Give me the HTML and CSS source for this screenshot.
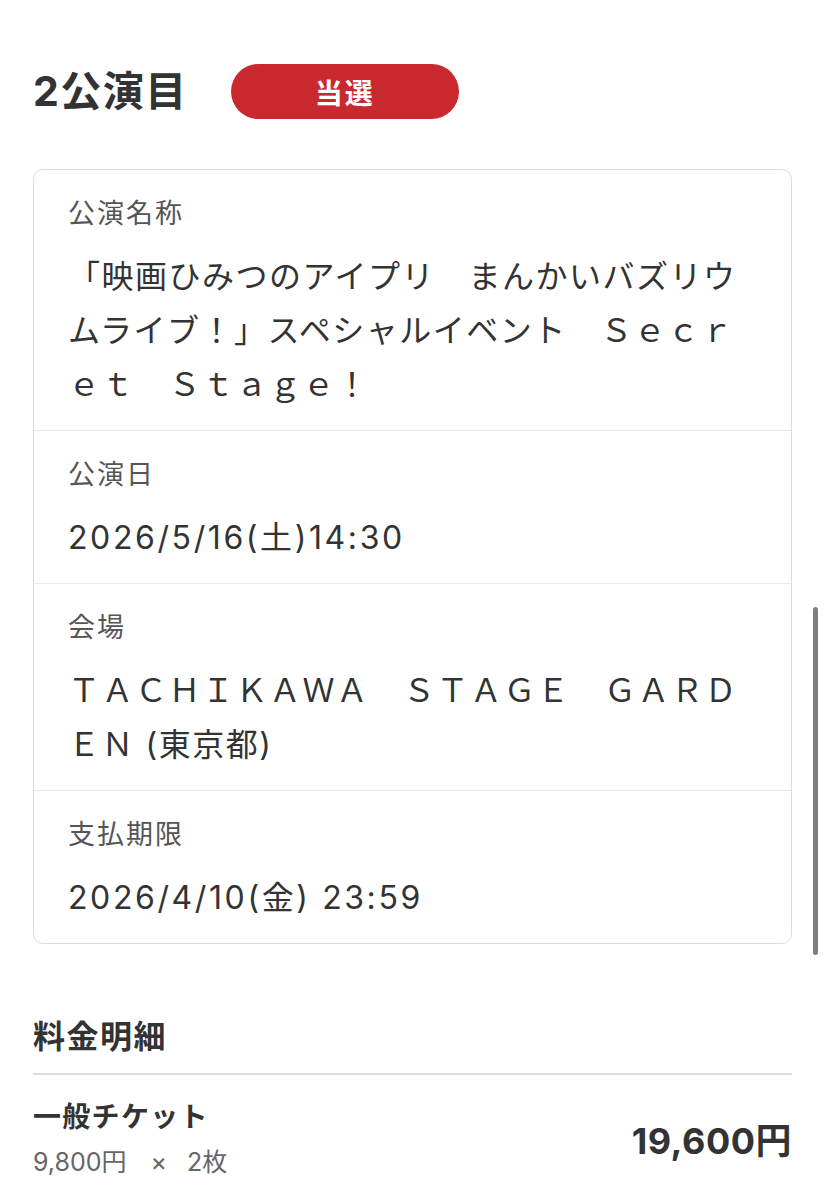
FILE: index.html
```html
<!DOCTYPE html>
<html lang="ja">
<head>
<meta charset="utf-8">
<link rel="stylesheet" href="styles.css">
</head>
<body>
<div class="page">
  <div class="head">
    <h1 class="title">2公演目</h1>
    <span class="badge">当選</span>
  </div>
  <div class="card">
    <div class="row">
      <div class="label">公演名称</div>
      <div class="value">「映画ひみつのアイプリ　まんかいバズリウムライブ！」スペシャルイベント　Ｓｅｃｒｅｔ　Ｓｔａｇｅ！</div>
    </div>
    <div class="row">
      <div class="label">公演日</div>
      <div class="value date">2026/5/16(土)14:30</div>
    </div>
    <div class="row">
      <div class="label">会場</div>
      <div class="value">ＴＡＣＨＩＫＡＷＡ　ＳＴＡＧＥ　ＧＡＲＤＥＮ (東京都)</div>
    </div>
    <div class="row">
      <div class="label">支払期限</div>
      <div class="value date">2026/4/10(金) 23:59</div>
    </div>
  </div>
  <h2 class="section">料金明細</h2>
  <div class="item">
    <div class="item-info">
      <div class="item-name">一般チケット</div>
      <div class="item-sub">9,800円<span class="times">×</span>2枚</div>
    </div>
    <div class="item-price">19,600円</div>
  </div>
</div>
<div class="scrollbar"></div>
</body>
</html>
```
FILE: styles.css
```css
html, body {
  margin: 0;
  padding: 0;
  background: #fff;
}
body {
  font-family: Inter, "Noto Sans CJK JP", "Noto Sans", sans-serif;
  color: #333;
}
.page {
  padding: 64px 32px 0 33px;
}
.head {
  display: flex;
  align-items: center;
  height: 55px;
}
.title {
  margin: 0;
  font-size: 41px;
  letter-spacing: 1.5px;
  font-weight: 700;
  line-height: 55px;
  color: #333;
}
.badge {
  margin-left: 43px;
  width: 228px;
  height: 55px;
  border-radius: 28px;
  background: #c9282e;
  color: #fff;
  font-size: 28px;
  letter-spacing: 2px;
  font-weight: 700;
  display: flex;
  align-items: center;
  justify-content: center;
}
.card {
  margin-top: 50px;
  border: 1px solid #dcdcdc;
  border-radius: 10px;
}
.row {
  padding: 26px 34px 18px 34px;
  border-top: 1px solid #e8e8e8;
}
.row:first-child {
  border-top: none;
}
.label {
  font-size: 27px;
  letter-spacing: 2px;
  line-height: 36px;
  color: #555;
}
.value {
  margin-top: 18px;
  font-size: 32px;
  letter-spacing: 1.5px;
  line-height: 54px;
  color: #333;
}
.value.date {
  letter-spacing: 2.6px;
}
.section {
  margin: 71px 0 0 0;
  padding-bottom: 14px;
  border-bottom: 2px solid #dddddd;
  font-size: 32px;
  letter-spacing: 1.5px;
  line-height: 44px;
  font-weight: 700;
  color: #333;
}
.item {
  display: flex;
  justify-content: space-between;
  align-items: center;
  padding-top: 22px;
}
.item-name {
  font-size: 28px;
  letter-spacing: 1.3px;
  line-height: 40px;
  font-weight: 700;
  color: #333;
}
.item-sub {
  margin-top: 8px;
  font-size: 25px;
  line-height: 34px;
  color: #666;
}
.times {
  display: inline-block;
  margin: 0 20px 0 24px;
  font-size: 25px;
}
.item-price {
  font-size: 36px;
  letter-spacing: 0.5px;
  font-weight: 700;
  color: #333;
}
.scrollbar {
  position: fixed;
  left: 813px;
  top: 607px;
  width: 5px;
  height: 348px;
  border-radius: 3px;
  background: #7f7f7f;
}
```
